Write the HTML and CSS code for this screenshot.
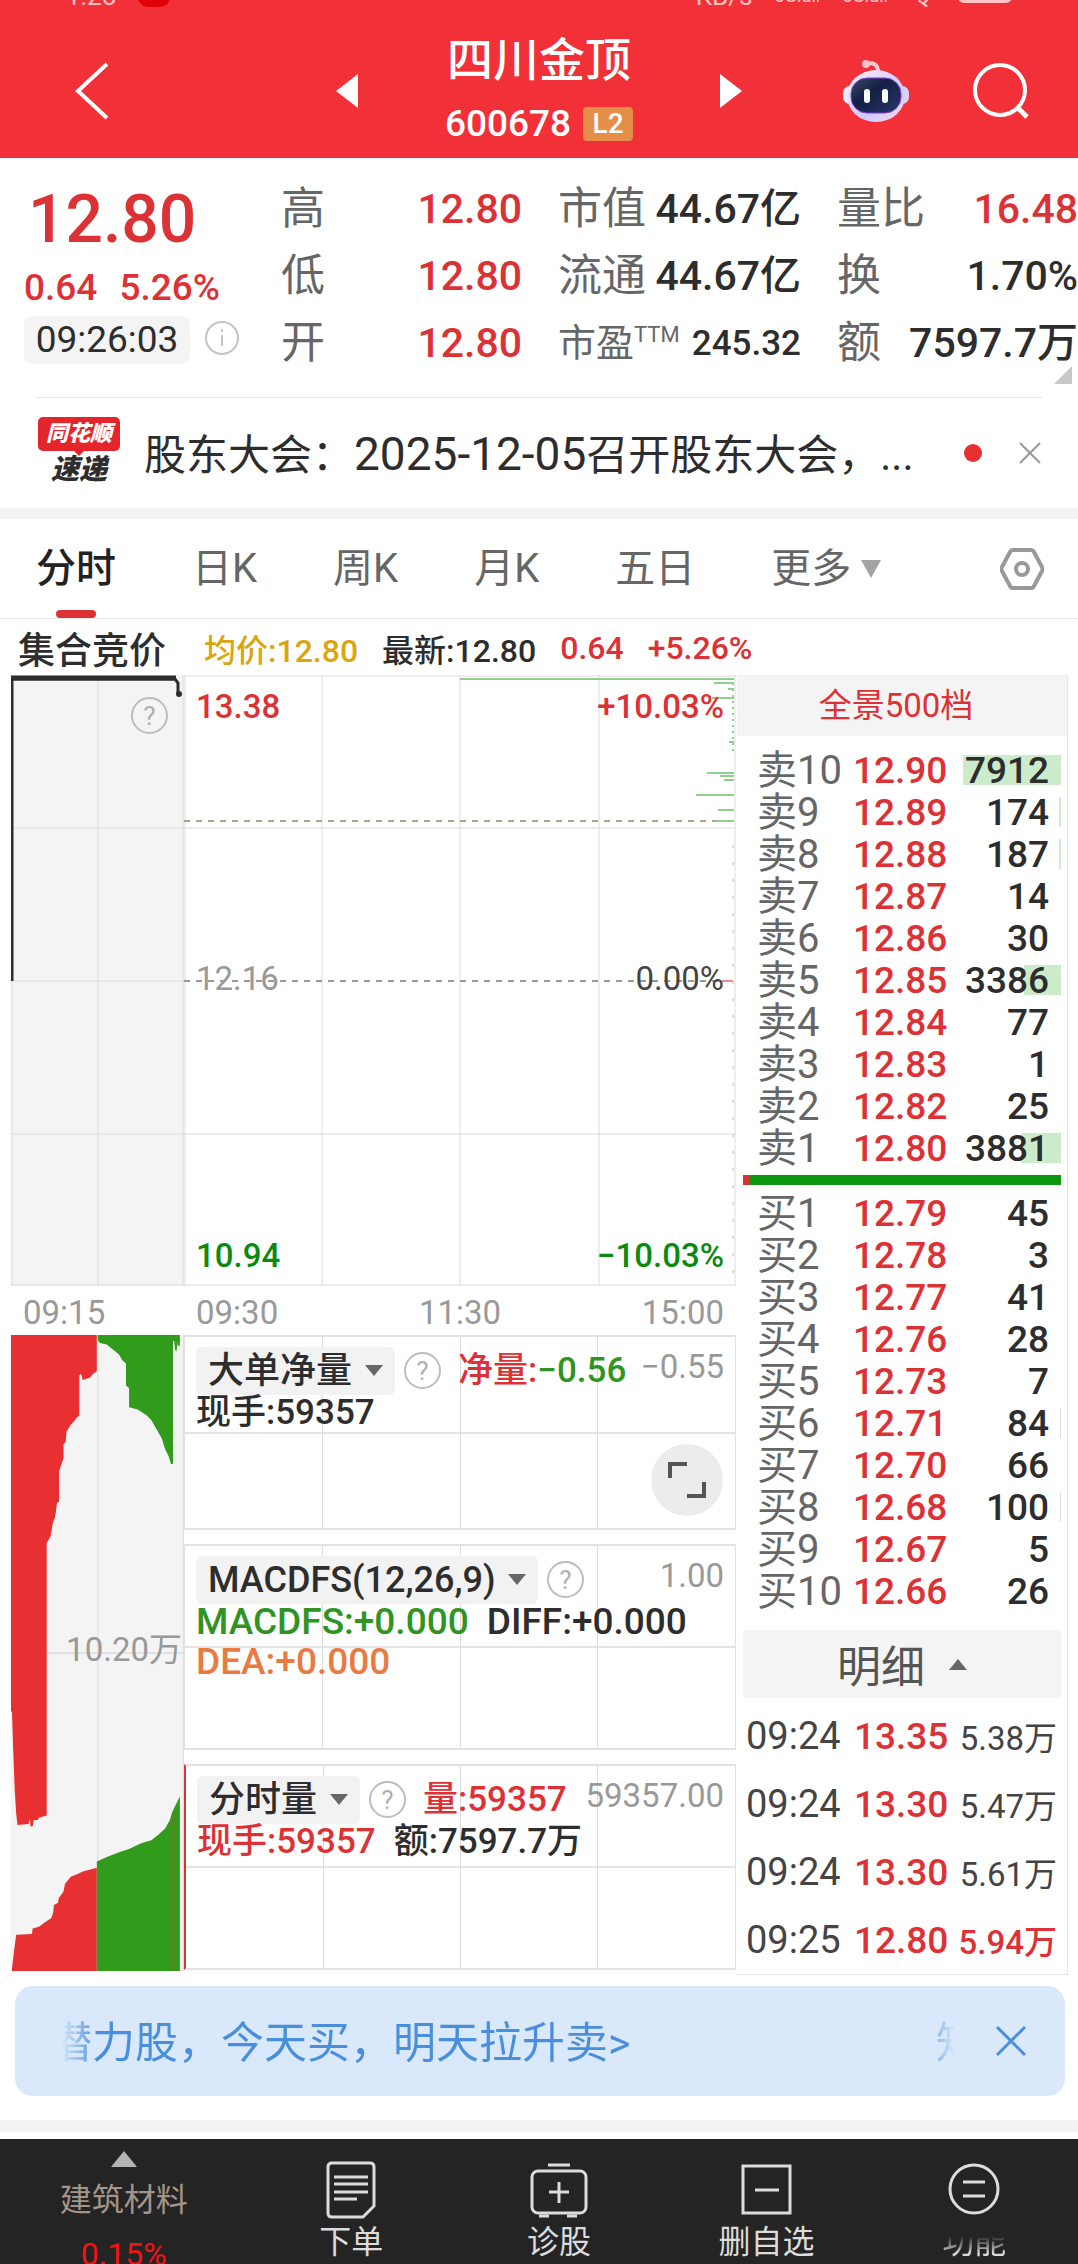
FILE: index.html
```html
<!DOCTYPE html>
<html lang="zh-CN">
<head>
    <meta charset="UTF-8">
    <meta name="viewport" content="width=device-width, initial-scale=1.0">
    <title>四川金顶 600678</title>
    <link rel="stylesheet" href="styles.css">
</head>
<body>
    <header class="header">
        <div class="status">
            <span>1:25</span><i class="s-rec"></i>
            <span class="s-net">KB/s</span><span class="s-sig">5G.ull</span><span class="s-sig">5G.ull</span><span>令</span><i class="s-bat"></i>
        </div>
        <div class="bar">
            <button class="icon-btn back" aria-label="返回">
                <svg width="36" height="60" viewBox="0 0 36 60"><path d="M33 3L4 30L33 57" fill="none" stroke="#fff" stroke-width="4"/></svg>
            </button>
            <div class="title">
                <button class="icon-btn" aria-label="上一只"><svg width="24" height="36" viewBox="0 0 24 36"><path d="M23 1v34L1 18z" fill="#fff"/></svg></button>
                <div class="name">
                    <h1>四川金顶</h1>
                    <p>600678 <span class="l2">L2</span></p>
                </div>
                <button class="icon-btn" aria-label="下一只"><svg width="24" height="36" viewBox="0 0 24 36"><path d="M1 1v34L23 18z" fill="#fff"/></svg></button>
            </div>
            <div class="tools">
                <button class="icon-btn" aria-label="助手">
                    <svg width="68" height="64" viewBox="0 0 68 64">
                        <defs>
                            <linearGradient id="shell" x1="0" y1="0" x2="1" y2="1"><stop offset="0" stop-color="#fff0f6"/><stop offset=".6" stop-color="#cfc8fb"/><stop offset="1" stop-color="#f6dcf2"/></linearGradient>
                            <linearGradient id="face" x1="0" y1="0" x2="1" y2="1"><stop offset="0" stop-color="#3b4a6c"/><stop offset=".4" stop-color="#141f42"/><stop offset="1" stop-color="#26376a"/></linearGradient>
                        </defs>
                        <path d="M24 5c7-2 12 0 12 8" fill="none" stroke="#ffc9d3" stroke-width="4"/>
                        <circle cx="24" cy="5" r="4" fill="#ffc4cc"/>
                        <rect x="1" y="27" width="14" height="18" rx="7" fill="#eef0ff"/>
                        <rect x="53" y="27" width="14" height="18" rx="7" fill="#d9d3fb"/>
                        <ellipse cx="34" cy="37" rx="29" ry="26" fill="url(#shell)"/>
                        <rect x="9" y="19" width="50" height="35" rx="16" fill="url(#face)" stroke="#7b3fd0" stroke-width="1"/>
                        <rect x="22" y="30" width="6" height="14" rx="3" fill="#fff"/>
                        <rect x="40" y="30" width="6" height="14" rx="3" fill="#fff"/>
                    </svg>
                </button>
                <button class="icon-btn" aria-label="搜索">
                    <svg width="58" height="58" viewBox="0 0 58 58" fill="none" stroke="#fff"><circle cx="28" cy="28" r="25" stroke-width="4"/><path d="M45 45l10 10" stroke-width="5"/></svg>
                </button>
            </div>
        </div>
    </header>

    <section class="quote">
        <div class="price">
            <div class="last red">12.80</div>
            <div class="chg red"><span>0.64</span><span>5.26%</span></div>
            <div class="clock"><time>09:26:03</time>
                <svg width="36" height="36" viewBox="0 0 36 36" fill="none" stroke="#c4c4c4"><circle cx="18" cy="18" r="16" stroke-width="2"/><path d="M18 15v11M18 9v3" stroke-width="2"/></svg>
            </div>
        </div>
        <dl>
            <div><dt>高</dt><dd class="red">12.80</dd></div>
            <div><dt>低</dt><dd class="red">12.80</dd></div>
            <div><dt>开</dt><dd class="red">12.80</dd></div>
        </dl>
        <dl>
            <div><dt>市值</dt><dd>44.67亿</dd></div>
            <div><dt>流通</dt><dd>44.67亿</dd></div>
            <div><dt class="ttm">市盈<sup>TTM</sup></dt><dd class="pe">245.32</dd></div>
        </dl>
        <dl>
            <div><dt>量比</dt><dd class="red">16.48</dd></div>
            <div><dt>换</dt><dd>1.70%</dd></div>
            <div><dt>额</dt><dd>7597.7万</dd></div>
        </dl>
        <svg class="corner" width="18" height="18" viewBox="0 0 18 18"><path d="M18 0v18H0z" fill="#c8c8c8"/></svg>
    </section>

    <section class="news">
        <div class="logo">
            <b class="logo-top">同花顺</b>
            <b class="logo-sub">速递</b>
        </div>
        <a href="#" class="news-text">股东大会：<span class="date">2025-12-05</span>召开股东大会，...</a>
        <i class="dot"></i>
        <button class="icon-btn" aria-label="关闭"><svg width="24" height="24" viewBox="0 0 24 24"><path d="M2 2l20 20M22 2L2 22" stroke="#999" stroke-width="2"/></svg></button>
    </section>

    <nav class="tabs">
        <button class="tab active">分时</button>
        <button class="tab">日K</button>
        <button class="tab">周K</button>
        <button class="tab">月K</button>
        <button class="tab">五日</button>
        <button class="tab more" aria-haspopup="true">更多<svg width="20" height="18" viewBox="0 0 20 18"><path d="M0 0h20L10 18z" fill="#a3a3a3"/></svg></button>
        <button class="icon-btn gear" aria-label="设置">
            <svg width="44" height="44" viewBox="0 0 44 44" fill="none" stroke="#999" stroke-width="4"><path d="M13 3h18q2 0 3 2l8 15q1 2 0 4l-8 15q-1 2-3 2H13q-2 0-3-2L2 24q-1-2 0-4l8-15q1-2 3-2z"/><circle cx="22" cy="22" r="6"/></svg>
        </button>
    </nav>

    <div class="info">
        <b>集合竞价</b>
        <span class="avg">均价:12.80</span>
        <span>最新:12.80</span>
        <span class="red">0.64</span>
        <span class="red">+5.26%</span>
    </div>

    <main class="board">
        <!-- call auction -->
        <section class="auction">
            <div class="chart gray">
                <svg class="plot" viewBox="0 0 173 611" preserveAspectRatio="none" fill="none">
                    <path d="M1 0V611M87 0V611M172 0V611M0 153H173M0 306H173M0 459H173M0 610H173" stroke="#dcdcdc" stroke-width="1"/>
                    <path d="M1 306V4H164L167 8V18" stroke="#2d2d2d" stroke-width="3"/>
                    <path d="M0 3H165" stroke="#2d2d2d" stroke-width="5"/>
                    <circle cx="168" cy="19" r="3" fill="#2d2d2d"/>
                </svg>
                <button class="help" aria-label="说明">?</button>
            </div>
            <div class="axis"><span>09:15</span></div>
            <div class="chart gray vol">
                <svg class="plot" viewBox="31 79 504 1424" preserveAspectRatio="none">
                    <path d="M31 791H535M284 79V1503M533 79V1503" fill="none" stroke="#dcdcdc" stroke-width="3"/>
                    <path fill="#e83033" d="M31 79H281V160L270 166L262 174L240 180L235 166L230 170V260L222 264L215 272L205 280L193 295L190 318L184 324V355L175 375L171 385V452L165 455L160 485L153 500L146 530L135 545V1155L112 1160L110 1165L97 1165L95 1178L88 1180L86 1162L82 1174L50 1176L46 1150L42 1100L37 1000L34 925L31 920z"/>
                    <path fill="#319c1c" d="M284 79H523V103H517V92L513 116L509 112L507 94L503 92V367L497 368L490 350L480 335L470 310L455 290L440 270L425 258L400 246L375 241V198L366 192V143L356 136L345 122L325 110L310 100L290 97L284 91z"/>
                    <path fill="#e83033" d="M33 1503L38 1470L46 1422L92 1420L94 1408L112 1404L130 1394L148 1385L154 1372L156 1355L168 1350L170 1340L184 1325L188 1308L205 1292L230 1284L240 1280L281 1272V1503z"/>
                    <path fill="#319c1c" d="M281 1258L310 1248L350 1236L375 1230L410 1217L440 1210L460 1198L480 1184L494 1165L500 1148L523 1112V1503H281z"/>
                    <path d="M502 1150V1503" stroke="#6b7a1c" stroke-width="4"/>
                </svg>
                <span class="vol-mid">10.20万</span>
            </div>
        </section>

        <!-- intraday chart and indicators -->
        <section class="intraday">
            <div class="chart">
                <svg class="plot" viewBox="0 0 552 611" preserveAspectRatio="none" fill="none">
                    <path d="M1 0V611M138 0V611M276 0V611M415 0V611M551 0V611M0 1H552M0 153H552M0 459H552M0 610H552" stroke="#dcdcdc"/>
                    <path d="M0 146H552" stroke="#a9a58a" stroke-width="2" stroke-dasharray="6 6"/>
                    <path d="M0 306H552" stroke="#999" stroke-width="2" stroke-dasharray="6 6"/>
                    <path d="M276 4H550M530 8H550M544 14H550M528 23H550M545 67H550M523 98H550M536 101H550M540 105H550M512 120H550M534 135H550M531 146H550" stroke="#8fd08f" stroke-width="2"/>
                    <path d="M549 8V76" stroke="#8fd08f" stroke-width="2" stroke-dasharray="2 4"/>
                    <path d="M549 170V600" stroke="#ddd" stroke-width="2" stroke-dasharray="3 14"/>
                    <path d="M538 306H549" stroke="#e88" stroke-width="2"/>
                </svg>
                <div class="levels">
                    <p class="red"><span>13.38</span><span>+10.03%</span></p>
                    <p class="flat"><span>12.16</span><span class="zero">0.00%</span></p>
                    <p class="green"><span>10.94</span><span>−10.03%</span></p>
                </div>
            </div>
            <div class="axis"><span>09:30</span><span>11:30</span><span>15:00</span></div>

            <div class="panel first">
                <div class="row">
                    <label class="pick"><select aria-label="指标一"><option>大单净量</option></select><svg width="18" height="11" viewBox="0 0 18 11"><path d="M0 0h18L9 11z" fill="#666"/></svg></label>
                    <button class="help" aria-label="说明">?</button>
                    <span class="red">净量:<span class="green2">−0.56</span></span>
                    <span class="max">−0.55</span>
                </div>
                <p>现手:59357</p>
                <button class="expand" aria-label="全屏">
                    <svg width="40" height="40" viewBox="0 0 40 40" fill="none" stroke="#555" stroke-width="4"><path d="M3 18V4H20M37 22V36H20"/></svg>
                </button>
            </div>
            <div class="panel">
                <div class="row">
                    <label class="pick"><select aria-label="指标二"><option>MACDFS(12,26,9)</option></select><svg width="18" height="11" viewBox="0 0 18 11"><path d="M0 0h18L9 11z" fill="#666"/></svg></label>
                    <button class="help" aria-label="说明">?</button>
                    <span class="max">1.00</span>
                </div>
                <p class="macd"><span class="green2">MACDFS:+0.000</span><span>DIFF:+0.000</span></p>
                <p class="macd orange">DEA:+0.000</p>
            </div>
            <div class="panel last-panel">
                <div class="row">
                    <label class="pick"><select aria-label="指标三"><option>分时量</option></select><svg width="18" height="11" viewBox="0 0 18 11"><path d="M0 0h18L9 11z" fill="#666"/></svg></label>
                    <button class="help" aria-label="说明">?</button>
                    <span class="red">量:59357</span>
                    <span class="max">59357.00</span>
                </div>
                <p><span class="red">现手:59357</span><span>额:7597.7万</span></p>
            </div>
        </section>

        <!-- order book -->
        <aside class="book">
            <a href="#" class="depth">全景500档</a>
            <table class="orders">
                <tr><th>卖10</th><td>12.90</td><td><i style="width: 98px"></i><b>7912</b></td></tr>
                <tr><th>卖9</th><td>12.89</td><td><i style="width: 2px"></i><b>174</b></td></tr>
                <tr><th>卖8</th><td>12.88</td><td><i style="width: 2px"></i><b>187</b></td></tr>
                <tr><th>卖7</th><td>12.87</td><td><b>14</b></td></tr>
                <tr><th>卖6</th><td>12.86</td><td><b>30</b></td></tr>
                <tr><th>卖5</th><td>12.85</td><td><i style="width: 37px"></i><b>3386</b></td></tr>
                <tr><th>卖4</th><td>12.84</td><td><b>77</b></td></tr>
                <tr><th>卖3</th><td>12.83</td><td><b>1</b></td></tr>
                <tr><th>卖2</th><td>12.82</td><td><b>25</b></td></tr>
                <tr><th>卖1</th><td>12.80</td><td><i style="width: 40px"></i><b>3881</b></td></tr>
            </table>
            <div class="ratio"><i style="width: 2%"></i></div>
            <table class="orders buy">
                <tr><th>买1</th><td>12.79</td><td><b>45</b></td></tr>
                <tr><th>买2</th><td>12.78</td><td><b>3</b></td></tr>
                <tr><th>买3</th><td>12.77</td><td><b>41</b></td></tr>
                <tr><th>买4</th><td>12.76</td><td><b>28</b></td></tr>
                <tr><th>买5</th><td>12.73</td><td><b>7</b></td></tr>
                <tr><th>买6</th><td>12.71</td><td><i style="width: 1px"></i><b>84</b></td></tr>
                <tr><th>买7</th><td>12.70</td><td><b>66</b></td></tr>
                <tr><th>买8</th><td>12.68</td><td><i style="width: 1px"></i><b>100</b></td></tr>
                <tr><th>买9</th><td>12.67</td><td><b>5</b></td></tr>
                <tr><th>买10</th><td>12.66</td><td><b>26</b></td></tr>
            </table>
            <button class="detail">明细<svg width="18" height="11" viewBox="0 0 18 11"><path d="M0 11h18L9 0z" fill="#666"/></svg></button>
            <table class="trades">
                <tr><td>09:24</td><td class="red">13.35</td><td>5.38万</td></tr>
                <tr><td>09:24</td><td class="red">13.30</td><td>5.47万</td></tr>
                <tr><td>09:24</td><td class="red">13.30</td><td>5.61万</td></tr>
                <tr><td>09:25</td><td class="red">12.80</td><td class="red">5.94万</td></tr>
            </table>
        </aside>
    </main>

    <section class="banner">
        <a href="#" class="marquee"><span>潜力股，今天买，明天拉升卖&gt;</span><span>知</span></a>
        <button class="icon-btn" aria-label="关闭"><svg width="32" height="32" viewBox="0 0 32 32"><path d="M2 2l28 28M30 2L2 30" stroke="#4a8fdc" stroke-width="3"/></svg></button>
    </section>

    <nav class="bottom">
        <a href="#" class="sector">
            <svg width="26" height="16" viewBox="0 0 26 16"><path d="M13 0l13 16H0z" fill="#b4b4b4"/></svg>
            <span>建筑材料</span>
            <em>0.15%</em>
        </a>
        <a href="#">
            <svg width="58" height="58" viewBox="0 0 58 58" fill="none" stroke="#dcdcdc" stroke-width="3"><path d="M10 2h38q4 0 4 4V45L41 56H10q-4 0-4-4V6q0-4 4-4z"/><path d="M12 16h34M12 23h34M12 31h34M12 38h23"/></svg>
            <span>下单</span>
        </a>
        <a href="#">
            <svg width="58" height="58" viewBox="0 0 58 58" fill="none" stroke="#dcdcdc" stroke-width="3"><rect x="2" y="10" width="54" height="42" rx="6"/><path d="M18 4h22M29 21v21M19 31h20M9 55h10M37 55h10"/></svg>
            <span>诊股</span>
        </a>
        <a href="#">
            <svg width="58" height="58" viewBox="0 0 58 58" fill="none" stroke="#dcdcdc" stroke-width="3"><path d="M5 5h47v47H5zM17 29h24"/></svg>
            <span>删自选</span>
        </a>
        <a href="#">
            <svg width="58" height="58" viewBox="0 0 58 58" fill="none" stroke="#dcdcdc" stroke-width="3"><circle cx="29" cy="28" r="24"/><path d="M18 21h22M18 35h22"/></svg>
            <span class="fade">功能</span>
        </a>
    </nav>
</body>
</html>
```

FILE: styles.css
```css
* {
    box-sizing: border-box;
}
body {
    margin: 0;
    background: #fff;
    color: #2d2d2d;
    font-family: Roboto, "Noto Sans CJK SC", sans-serif;
    font-size: 34px;
}
h1, p, dl, dd {
    margin: 0;
}
button, select {
    font: inherit;
    color: inherit;
    border: 0;
    padding: 0;
    background: none;
}
a {
    color: inherit;
    text-decoration: none;
}
svg {
    display: block;
    flex: none;
}
table {
    border-collapse: collapse;
}
.red {
    color: #dc3135;
}
.green {
    color: #0b8a10;
}
.green2 {
    color: #2f9422;
}
.orange {
    color: #e97a42;
}

/* header */
.header {
    background: #f13038;
    color: #fff;
    height: 158px;
}
.status {
    display: flex;
    align-items: flex-end;
    gap: 22px;
    height: 7px;
    padding: 0 66px;
    overflow: hidden;
    font-size: 26px;
    line-height: 22px;
    color: #ffc4c6;
}
.s-rec {
    width: 32px;
    height: 20px;
    border-radius: 10px;
    background: #e20008;
}
.s-net {
    margin-left: auto;
}
.s-sig {
    font-size: 18px;
}
.s-bat {
    width: 54px;
    height: 20px;
    margin-bottom: 4px;
    border: 3px solid #ffc4c6;
    border-radius: 6px;
}
.bar {
    display: grid;
    grid-template-columns: 1fr 408px 1fr;
    align-items: center;
    height: 151px;
    padding: 16px 48px 0;
}
.back {
    padding-left: 26px;
}
.title {
    display: flex;
    justify-content: space-between;
    align-items: center;
}
.name {
    text-align: center;
}
.name h1 {
    font-size: 46px;
    line-height: 64px;
    font-weight: 500;
}
.name p {
    display: flex;
    align-items: center;
    justify-content: center;
    gap: 12px;
    padding-top: 2px;
    font-size: 37px;
    line-height: 60px;
    font-weight: 500;
}
.l2 {
    width: 50px;
    font-size: 28px;
    line-height: 34px;
    border-radius: 4px;
    background: #e58e4a;
}
.tools {
    display: flex;
    justify-content: flex-end;
    align-items: center;
    gap: 62px;
}

/* quote */
.quote {
    position: relative;
    display: grid;
    grid-template-columns: 245fr 241fr 243fr 241fr;
    column-gap: 36px;
    height: 240px;
    padding-top: 18px;
    line-height: 67px;
}
.quote::after {
    content: "";
    position: absolute;
    left: 36px;
    right: 36px;
    bottom: 0;
    height: 1px;
    background: #e6e6e6;
}
.price {
    padding-left: 24px;
}
.last {
    font-size: 66px;
    font-weight: 500;
    line-height: 88px;
    padding-left: 4px;
}
.chg {
    display: flex;
    gap: 22px;
    font-size: 37px;
    font-weight: 500;
    line-height: 48px;
}
.clock {
    display: flex;
    align-items: center;
    gap: 14px;
    white-space: nowrap;
}
.clock time {
    width: 166px;
    margin-top: 4px;
    text-align: center;
    font-size: 37px;
    line-height: 48px;
    background: #f4f4f4;
    border-radius: 8px;
}
.quote dl div {
    display: flex;
    justify-content: space-between;
    align-items: center;
    height: 67px;
    white-space: nowrap;
}
.quote dt {
    font-size: 44px;
    color: #666;
}
.quote dd {
    font-size: 41px;
    font-weight: 500;
}
.quote dt.ttm {
    font-size: 38px;
}
.ttm sup {
    font-size: 22px;
    line-height: 0;
}
.quote dd.pe {
    font-size: 35px;
}
.corner {
    position: absolute;
    right: 6px;
    bottom: 14px;
}

/* news */
.news {
    display: flex;
    align-items: center;
    height: 110px;
    padding: 0 36px 0 38px;
}
.logo {
    width: 82px;
    margin-right: 24px;
    text-align: center;
    font-style: italic;
}
.logo b {
    display: block;
    font-weight: 900;
}
.logo-top {
    position: relative;
    font-size: 22px;
    line-height: 34px;
    color: #fff;
    border-radius: 5px;
    background: #e4262c;
}
.logo-top::after {
    content: "";
    position: absolute;
    left: 34px;
    top: 32px;
    border: 7px solid transparent;
    border-top-color: #e4262c;
}
.logo-sub {
    font-size: 28px;
    line-height: 38px;
}
.news-text {
    flex: 1;
    padding-bottom: 4px;
    font-size: 42px;
    white-space: nowrap;
}
.date {
    font-size: 46px;
}
.dot {
    width: 18px;
    height: 18px;
    margin-right: 36px;
    border-radius: 50%;
    background: #e83033;
}

/* tabs */
.tabs {
    display: flex;
    align-items: center;
    gap: 76px;
    height: 111px;
    padding: 0 34px 0 36px;
    border-top: 11px solid #f3f3f3;
    border-bottom: 1px solid #e6e6e6;
}
.tab {
    font-size: 40px;
    line-height: 99px;
    color: #666;
}
.tab.active {
    position: relative;
    color: #222;
    font-weight: 500;
}
.tab.active::after {
    content: "";
    position: absolute;
    left: 20px;
    right: 20px;
    bottom: 0;
    height: 8px;
    border-radius: 4px;
    background: #dc3135;
}
.more {
    display: flex;
    align-items: center;
    gap: 10px;
}
.gear {
    margin-left: auto;
}
.info {
    display: flex;
    align-items: center;
    gap: 24px;
    height: 56px;
    padding: 2px 18px 0;
    font-size: 32px;
    font-weight: 500;
    white-space: nowrap;
}
.info b {
    margin-right: 14px;
    font-size: 37px;
    font-weight: 500;
}
.avg {
    color: #dba50f;
}

/* charts */
.board {
    display: grid;
    grid-template-columns: 173fr 552fr 332fr;
    padding: 0 10px 0 11px;
}
.chart {
    position: relative;
    height: 611px;
}
.gray {
    background: #f4f4f4;
}
.vol {
    height: 636px;
}
.plot {
    position: absolute;
    left: 0;
    top: 0;
    width: 100%;
    height: 100%;
}
.help {
    width: 37px;
    height: 37px;
    border: 2px solid #bdbdbd;
    border-radius: 50%;
    font-size: 26px;
    line-height: 30px;
    color: #b0b0b0;
}
.auction .help {
    position: absolute;
    top: 22px;
    right: 16px;
}
.axis {
    display: flex;
    justify-content: space-between;
    height: 49px;
    padding: 0 12px;
    font-size: 33px;
    line-height: 54px;
    color: #999;
}
.vol-mid {
    position: absolute;
    right: 2px;
    top: 288px;
    font-size: 33px;
    color: #999;
}
.levels {
    position: relative;
    display: flex;
    flex-direction: column;
    justify-content: space-between;
    height: 100%;
    padding: 10px 12px 8px;
    font-size: 33px;
    line-height: 44px;
}
.levels p {
    display: flex;
    justify-content: space-between;
    font-weight: 500;
}
.levels .flat {
    padding-bottom: 6px;
    font-weight: 400;
    color: #999;
}
.levels .zero {
    color: #444;
}
.panel {
    position: relative;
    height: 206px;
    margin-bottom: 14px;
    padding: 11px 11px 0;
    border: 1px solid #e2e2e2;
    border-width: 2px 1px;
    background:
        linear-gradient(#dcdcdc, #dcdcdc) 25% 0 / 1px 100% no-repeat,
        linear-gradient(#dcdcdc, #dcdcdc) 50% 0 / 1px 100% no-repeat,
        linear-gradient(#dcdcdc, #dcdcdc) 75% 0 / 1px 100% no-repeat,
        linear-gradient(#e4e4e4, #e4e4e4) 0 50% / 100% 2px no-repeat;
    font-size: 35px;
    line-height: 40px;
    white-space: nowrap;
}
.panel.first {
    height: 195px;
}
.last-panel {
    margin-bottom: 0;
    border-left: 2px solid #dc3135;
}
.row {
    display: flex;
    align-items: center;
    gap: 9px;
    height: 45px;
}
.row .red {
    margin-left: 8px;
    font-weight: 500;
}
.max {
    margin-left: auto;
    padding-bottom: 8px;
    font-size: 33px;
    color: #999;
}
.panel p {
    display: flex;
    gap: 18px;
    font-weight: 500;
}
.panel .macd {
    font-size: 37px;
}
.pick {
    display: flex;
    align-items: center;
    gap: 12px;
    height: 48px;
    padding: 0 12px;
    border-radius: 6px;
    background: #f2f2f2;
    font-size: 36px;
    font-weight: 500;
}
.pick select {
    appearance: none;
}
.expand {
    position: absolute;
    right: 12px;
    bottom: 12px;
    display: flex;
    align-items: center;
    justify-content: center;
    width: 72px;
    height: 72px;
    border-radius: 50%;
    background: #ececec;
}

/* order book */
.book {
    padding: 0 6px 0 7px;
    border-right: 1px solid #e6e6e6;
    border-bottom: 1px solid #e6e6e6;
}
.depth {
    display: block;
    margin: 0 -6px 14px;
    padding-right: 12px;
    font-size: 33px;
    line-height: 61px;
    text-align: center;
    color: #dc3135;
    background: #f4f4f4;
}
.orders {
    width: 100%;
    font-size: 40px;
    white-space: nowrap;
}
.orders th, .orders td {
    padding: 0;
    height: 42px;
    line-height: 38px;
    vertical-align: middle;
}
.orders th {
    width: 110px;
    padding-left: 14px;
    text-align: left;
    font-weight: 400;
    color: #666;
}
.orders td {
    color: #dc3135;
    font-size: 37px;
    font-weight: 500;
}
.orders td:last-child {
    position: relative;
    padding-right: 12px;
    text-align: right;
    color: #2d2d2d;
}
.orders td i {
    position: absolute;
    right: 0;
    top: 5px;
    height: 30px;
    background: #cbebcb;
}
.orders.buy td i {
    background: #ddd;
}
.orders td b {
    display: block;
    position: relative;
    font-weight: 500;
}
.ratio {
    height: 10px;
    margin: 5px 0 8px;
    background: #0b980f;
}
.ratio i {
    display: block;
    height: 100%;
    background: #dc3135;
}
.detail {
    display: flex;
    align-items: center;
    justify-content: center;
    gap: 24px;
    width: 100%;
    height: 68px;
    margin: 17px 0 4px;
    font-size: 44px;
    color: #555;
    background: #f4f4f4;
}
.trades {
    width: 100%;
    font-size: 38px;
    white-space: nowrap;
}
.trades td {
    height: 68px;
    padding: 0 0 0 3px;
    color: #444;
}
.trades .red {
    color: #dc3135;
    font-weight: 500;
}
.trades td:nth-child(2) {
    padding-left: 10px;
    font-size: 37px;
}
.trades td:last-child {
    padding-right: 4px;
    text-align: right;
    font-size: 33px;
}

/* banner */
.banner {
    display: flex;
    align-items: center;
    gap: 40px;
    height: 110px;
    margin: 11px 13px 24px 15px;
    padding: 0 38px 0 46px;
    border-radius: 18px;
    background: #dae8fb;
    color: #4a8fdc;
}
.marquee {
    display: flex;
    flex: 1;
    justify-content: space-between;
    overflow: hidden;
    padding-bottom: 4px;
    white-space: nowrap;
    font-size: 43px;
    -webkit-mask-image: linear-gradient(90deg, transparent, #000 36px, #000 calc(100% - 36px), transparent);
    mask-image: linear-gradient(90deg, transparent, #000 36px, #000 calc(100% - 36px), transparent);
}
.marquee span:first-child {
    margin-left: -12px;
}
.marquee span:last-child {
    margin-right: -24px;
}

/* bottom nav */
.bottom {
    display: grid;
    grid-template-columns: 248fr 208fr 208fr 208fr 208fr;
    height: 144px;
    border-top: 12px solid #f3f3f3;
    overflow: hidden;
    background: linear-gradient(#fff 7px, #242424 7px);
}
.bottom a {
    display: flex;
    flex-direction: column;
    align-items: center;
    padding-top: 29px;
    font-size: 32px;
    line-height: 40px;
    color: #dcdcdc;
}
.bottom svg {
    margin-bottom: 3px;
}
.bottom .sector {
    padding-top: 19px;
    color: #a39489;
}
.sector span {
    margin-top: 10px;
}
.sector em {
    margin-top: 14px;
    font-style: normal;
    color: #f01414;
}
.fade {
    -webkit-mask-image: linear-gradient(transparent 35%, #000 80%);
    mask-image: linear-gradient(transparent 35%, #000 80%);
}
```
